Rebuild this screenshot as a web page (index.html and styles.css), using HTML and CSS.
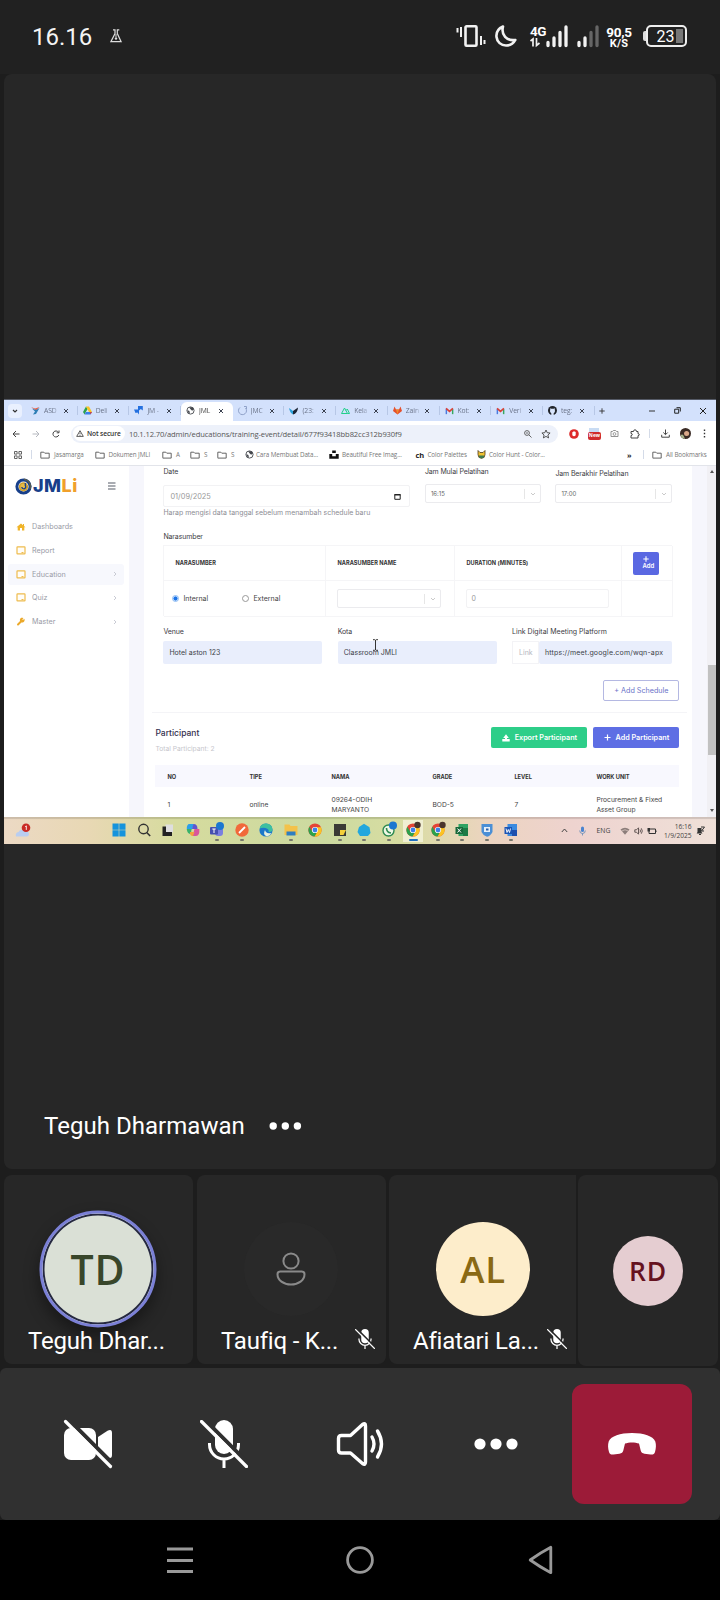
FILE: index.html
```html
<!DOCTYPE html>
<html lang="id">
<head>
<meta charset="utf-8">
<title>Meeting</title>
<link rel="stylesheet" href="styles.css">
</head>
<body>
<svg width="0" height="0" class="defs">
  <defs>
    <symbol id="x" viewBox="0 0 6 6"><path d="M1 1l4 4M5 1L1 5" stroke="#3c4250" stroke-width="1"/></symbol>
    <symbol id="folder" viewBox="0 0 10 8"><path d="M.8 6.6V1.2h3l1 1h4.4v4.9H.8z" fill="none" stroke="#555" stroke-width=".9"/></symbol>
    <symbol id="globe" viewBox="0 0 10 10"><circle cx="5" cy="5" r="4" fill="#fff" stroke="#44474d" stroke-width="1"/><path d="M1.3 4.5l2.5 1 .5 2.8L3 8.3zM3.5 1.3l3.8.2L8.7 4 6.8 5.2 5 3.5z" fill="#44474d"/></symbol>
    <symbol id="gmail" viewBox="0 0 10 8"><path d="M1.5 7.5V1.5" stroke="#4a7be0" stroke-width="1.6"/><path d="M8.5 7.5V2" stroke="#39a860" stroke-width="1.6"/><path d="M1.2 1.2L5 4.5l3.8-3.3" fill="none" stroke="#dc3f35" stroke-width="1.8"/></symbol>
    <symbol id="screen" viewBox="0 0 10 9"><rect x="1" y=".9" width="8" height="7" rx=".5" fill="#fffdf8" stroke="#eebc4e" stroke-width="1.2"/><path d="M5.5 6.500h2" stroke="#eebc4e" stroke-width="1"/></symbol>
    <symbol id="chev" viewBox="0 0 4 6"><path d="M1 1l2 2-2 2" fill="none" stroke="#c3c5cf" stroke-width=".9"/></symbol>
    <symbol id="down" viewBox="0 0 6 4"><path d="M1 1l2 2 2-2" fill="none" stroke="#c4c4c4" stroke-width=".9"/></symbol>
    <symbol id="chrome" viewBox="0 0 14 14"><circle cx="7" cy="7" r="6.6" fill="#e44436"/><path d="M1.3 3.7A6.6 6.6 0 0 0 6.6 13.6L9.5 8.5 4.3 8.5z" fill="#2ba24c"/><path d="M7 4.2h6A6.6 6.6 0 0 1 6.6 13.6L9.6 8.4z" fill="#fbc422"/><circle cx="7" cy="7" r="3.1" fill="#fff"/><circle cx="7" cy="7" r="2.4" fill="#3b7fe8"/></symbol>
    <symbol id="micoff" viewBox="0 0 48 48">
      <rect x="15" y="0" width="18" height="34" rx="9" fill="#fff"/>
      <path d="M9.500 23v1.500a14.500 14.500 0 0 0 29 0V23M24 39v9" fill="none" stroke="#fff" stroke-width="3"/>
      <path d="M4 -1L51 46" stroke="var(--back)" stroke-width="4"/>
      <path d="M1.500 1.500l45 45" stroke="#fff" stroke-width="3.200" stroke-linecap="round"/>
    </symbol>
  </defs>
</svg>

<header class="status">
  <span class="clock">16.16</span>
  <svg class="flask" width="12" height="14" viewBox="0 0 12 14"><path d="M3 .8h2v3.700L.9 12.700h10.200L7.300 4.500V.8H9.300" fill="none" stroke="#ddd" stroke-width="1.200"/><path d="M6 5v3" stroke="#ddd"/><circle cx="6" cy="9.500" r="1.200" fill="#ddd"/></svg>
  <svg class="vib" width="30" height="22" viewBox="0 0 30 22"><rect x="9.500" y="1.300" width="11" height="19.400" rx="1" fill="none" stroke="#f2f2f2" stroke-width="2.600"/><path d="M5 2v10M1.500 3v4.500M25 11v9M28.500 15v4" stroke="#f2f2f2" stroke-width="2"/></svg>
  <svg class="moon" width="22" height="22" viewBox="0 0 22 22"><path d="M8 1.500C3.500 3.500 1 7.500 1.500 12c.6 5 4.500 8.500 9.500 8.500 4 0 7.500-2.200 9.300-5.500-4 .6-7.600-.4-10.200-3.200C7.500 9 7 5.500 8 1.500z" fill="none" stroke="#f2f2f2" stroke-width="2.600" stroke-linejoin="round"/></svg>
  <div class="net"><b>4G</b><svg width="11" height="9" viewBox="0 0 11 9"><path d="M.5 3L3 1v7.500M6.500 0v7.500L9.500 5" fill="none" stroke="#f2f2f2" stroke-width="1.700"/></svg></div>
  <svg class="sig1" width="22" height="22" viewBox="0 0 22 22"><path d="M2 17.500v3M8 13v7.500M14 7.500v13M20 2v18.500" stroke="#f2f2f2" stroke-width="3.300" stroke-linecap="round"/></svg>
  <svg class="sig2" width="22" height="22" viewBox="0 0 22 22"><path d="M2 17.500v3M8 13v7.500" stroke="#f2f2f2" stroke-width="3.300" stroke-linecap="round"/><path d="M14 7.500v13M20 2v18.500" stroke="#666" stroke-width="3.300" stroke-linecap="round"/></svg>
  <div class="rate"><b>90,5</b><b class="ks">K/S</b></div>
  <div class="battery"><i class="nub"></i><div class="cell"><i class="charge"></i><span>23</span></div></div>
</header>

<main class="stage">
  <section class="share">
    <div class="tabs">
      <div class="tabsearch"><svg width="6" height="4" viewBox="0 0 6 4"><path d="M1 1l2 2 2-2" fill="none" stroke="#333" stroke-width="1.200"/></svg></div>
      <div class="tab"><svg width="9" height="9" viewBox="0 0 9 9"><path d="M0 1l4 1.500L8.500 1 5 4.500z" fill="#e3624b"/><path d="M1 2.500l4 1.500 3.500-2L5 8 2 8.500l2-3z" fill="#2e7fb5"/></svg><span>ASD</span><svg class="cl"><use href="#x"/></svg></div>
      <div class="tab"><svg width="9" height="9" viewBox="0 0 9 9"><path d="M3 .5L0 6l1.500 2.500L4.600 3z" fill="#2ba24c"/><path d="M3 .5h3L9 6H6z" fill="#fbc422"/><path d="M3 6h6L7.500 8.500h-6z" fill="#3b7fe8"/><path d="M7 6h2L7.500 8.500z" fill="#dc3f35"/></svg><span>Deli</span><svg class="cl"><use href="#x"/></svg></div>
      <div class="tab"><svg width="9" height="9" viewBox="0 0 9 9"><path d="M4 0h4.800v4.500L6.800 3 5 4.500v4L3.500 6.500 1.500 7 0 3.500h4z" fill="#2470df"/></svg><span>JM -</span><svg class="cl"><use href="#x"/></svg></div>
      <div class="tab on"><svg width="9" height="9"><use href="#globe"/></svg><span>JML</span><svg class="cl"><use href="#x"/></svg></div>
      <div class="tab"><svg width="9" height="9" viewBox="0 0 9 9"><path d="M2 1.500A4 4 0 1 0 7.500 2" fill="none" stroke="#8fa1c8" stroke-width="1"/><path d="M6 .5h2.500V3" fill="none" stroke="#8fa1c8"/></svg><span>JMC</span><svg class="cl"><use href="#x"/></svg></div>
      <div class="tab"><svg width="9" height="9" viewBox="0 0 9 9"><path d="M0 2l4 3v3.500Q1 7 0 2z" fill="#2aa0d8"/><path d="M4 5l5-3.500Q8.500 7.500 4 8.500z" fill="#1a2333"/></svg><span>(23:</span><svg class="cl"><use href="#x"/></svg></div>
      <div class="tab"><svg width="9" height="9" viewBox="0 0 9 9"><path d="M.5 7.500L3.500 2l3 5.500zM5 4.500l1.300-1.500 2.200 4.500H6.500" fill="none" stroke="#21cf8b" stroke-width="1"/></svg><span>Kela</span><svg class="cl"><use href="#x"/></svg></div>
      <div class="tab"><svg width="9" height="9" viewBox="0 0 9 9"><path d="M1.500.5L3 3.500h3L7.500.5 9 5 4.500 8.500 0 5z" fill="#e5502c"/><path d="M3 3.500h3L4.500 8.500z" fill="#f08a2c"/></svg><span>Zain</span><svg class="cl"><use href="#x"/></svg></div>
      <div class="tab"><svg width="9" height="8"><use href="#gmail"/></svg><span>Kot:</span><svg class="cl"><use href="#x"/></svg></div>
      <div class="tab"><svg width="9" height="8"><use href="#gmail"/></svg><span>Veri</span><svg class="cl"><use href="#x"/></svg></div>
      <div class="tab"><svg width="9" height="9" viewBox="0 0 9 9"><circle cx="4.500" cy="4.500" r="4.500" fill="#20242a"/><path d="M3.300 8.900V7.200C2 6.500 1.800 5 2.200 3.800L2.200 2.200l1.200.5h2.200l1.200-.5v1.600C7.200 5 7 6.500 5.700 7.200v1.700z" fill="#d8e4fb"/></svg><span>teg:</span><svg class="cl"><use href="#x"/></svg></div>
      <svg class="plus" width="6" height="6" viewBox="0 0 6 6"><path d="M3 .3v5.400M.3 3h5.400" stroke="#333" stroke-width=".9"/></svg>
      <svg class="wmin" width="6" height="6" viewBox="0 0 6 6"><path d="M0 3h6" stroke="#333" stroke-width="1"/></svg>
      <svg class="wmax" width="7" height="7" viewBox="0 0 7 7"><path d="M.7 2.200h4v4h-4z" fill="none" stroke="#222" stroke-width="1"/><path d="M2.500.7h3.800v3.800" fill="none" stroke="#222" stroke-width="1"/></svg>
      <svg class="wx" width="8" height="8" viewBox="0 0 8 8"><path d="M1 1l6 6M7 1L1 7" stroke="#222" stroke-width="1"/></svg>
    </div>

    <div class="toolbar">
      <svg width="8" height="8" viewBox="0 0 8 8"><path d="M7.500 4H1M4 1L1 4l3 3" fill="none" stroke="#444" stroke-width="1"/></svg>
      <svg width="8" height="8" viewBox="0 0 8 8"><path d="M.5 4H7M4 1l3 3-3 3" fill="none" stroke="#b5b8bf" stroke-width="1"/></svg>
      <svg width="8" height="8" viewBox="0 0 8 8"><path d="M6.800 5A3 3 0 1 1 6.400 2.200M7 .5v2.300H4.700" fill="none" stroke="#444" stroke-width="1"/></svg>
      <div class="omni">
        <div class="chip"><svg width="8" height="7" viewBox="0 0 8 7"><path d="M4 .7L7.300 6.400H.7zM4 2.700v1.600M4 5v.8" fill="none" stroke="#333" stroke-width=".8"/></svg><b>Not secure</b></div>
        <span class="url">10.1.12.70/admin/educations/training-event/detail/677f93418bb82cc312b930f9</span>
        <svg width="8" height="8" viewBox="0 0 8 8"><circle cx="3" cy="3" r="2.400" fill="none" stroke="#555" stroke-width=".9"/><path d="M4.800 4.800l2.700 2.700M2 3h2" stroke="#555" stroke-width=".9"/></svg>
        <svg width="10" height="10" viewBox="0 0 10 10"><path d="M5 1l1.200 2.700 2.900.3-2.200 2 .7 2.900L5 7.400 2.400 8.900 3.100 6 .9 4l2.900-.3z" fill="none" stroke="#444" stroke-width=".9"/></svg>
      </div>
      <svg class="t1" width="10" height="10" viewBox="0 0 10 10"><circle cx="5" cy="5" r="4.800" fill="#dd2a2a"/><path d="M3.300 3.200v3q1.700 2 3.400 0v-3.200L5 2.200z" fill="#fff"/></svg>
      <div class="new"><i></i><b>New</b></div>
      <svg class="t3" width="9" height="9" viewBox="0 0 9 9"><path d="M1 2.500h1.500l.8-1h2.400l.8 1H8v5H1z" fill="none" stroke="#888" stroke-width=".9"/><circle cx="4.500" cy="5" r="1.400" fill="none" stroke="#888" stroke-width=".8"/></svg>
      <svg class="t4" width="10" height="10" viewBox="0 0 10 10"><path d="M1 2.500h2.500q0-1.700 1.500-1.700t1.500 1.700H8v2.200q1.300 0 1.300 1T8 6.700V9H1V6.500q1.300 0 1.300-1T1 4.500z" fill="none" stroke="#444" stroke-width="1"/></svg>
      <i class="vbar"></i>
      <svg class="t5" width="9" height="9" viewBox="0 0 9 9"><path d="M4.500.5v5M2.300 3.500l2.200 2.200 2.200-2.200M.7 5.800v2.400h7.600V5.800" fill="none" stroke="#444" stroke-width="1"/></svg>
      <svg class="t6" width="11" height="11" viewBox="0 0 10 10"><circle cx="5" cy="5" r="5" fill="#3a2b25"/><circle cx="6" cy="5" r="2.300" fill="#dba98a"/><path d="M.5 7q2-3 4 2.900Q1.500 9.500.5 7z" fill="#a8b48c"/></svg>
      <svg class="t7" width="3" height="9" viewBox="0 0 3 9"><path d="M1.500 .5v1.400M1.500 3.800v1.400M1.500 7.100v1.400" stroke="#333" stroke-width="1.400"/></svg>
    </div>

    <div class="marks">
      <svg width="8" height="8" viewBox="0 0 8 8"><path d="M.5.500h2.600v2.600H.5zM4.900.500h2.600v2.600H4.900zM.5 4.900h2.600v2.600H.5zM4.900 4.900h2.600v2.600H4.900z" fill="none" stroke="#555" stroke-width=".9"/></svg>
      <i class="vbar"></i>
      <svg width="10" height="8"><use href="#folder"/></svg><span>Jasamarga</span>
      <svg width="10" height="8"><use href="#folder"/></svg><span>Dokumen JMLI</span>
      <svg width="10" height="8"><use href="#folder"/></svg><span>A</span>
      <svg width="10" height="8"><use href="#folder"/></svg><span>S</span>
      <svg width="10" height="8"><use href="#folder"/></svg><span>S</span>
      <svg width="9" height="9"><use href="#globe"/></svg><span>Cara Membuat Data...</span>
      <svg width="10" height="9" viewBox="0 0 10 9"><path d="M3.200.5h3.600v2.500H3.200zM.3 4h2.900v2.300h3.600V4h2.900v4.700H.3z" fill="#111"/></svg><span>Beautiful Free Imag...</span>
      <b>ch</b><span>Color Palettes</span>
      <svg width="9" height="9" viewBox="0 0 9 9"><path d="M1 .5v4a3.500 3.800 0 0 0 7 0v-4L6 2.500H3z" fill="#f2c230" stroke="#4b3b20" stroke-width=".8"/><path d="M2 5.500h5v2l-2.500 1L2 7.500z" fill="#3f7a50"/></svg><span>Color Hunt - Color...</span>
      <b class="more">»</b><i class="vbar"></i>
      <svg width="10" height="8"><use href="#folder"/></svg><span>All Bookmarks</span>
    </div>

    <div class="page">
      <aside class="side">
        <div class="brand">
          <svg width="17" height="17" viewBox="0 0 17 17"><circle cx="8.500" cy="8.500" r="6.600" fill="none" stroke="#173f8a" stroke-width="3"/><path d="M9 1.300A7.200 7.200 0 0 1 15 11" fill="none" stroke="#555a50" stroke-width="1.600"/><circle cx="8.500" cy="8.800" r="3.900" fill="#e8bb45" stroke="#cfa02d" stroke-width="1.500"/><path d="M6.800 9a2 2 0 1 0 3.500-1.500V5" fill="none" stroke="#173f8a" stroke-width="1.300"/></svg>
          <span class="logo">JM<em>Li</em></span>
          <svg class="burger" width="8" height="8" viewBox="0 0 8 8"><path d="M0 1h7.500M0 4h7.500M0 7h7.500" stroke="#555a66" stroke-width="1.100"/></svg>
        </div>
        <nav>
          <a><svg width="9" height="8" viewBox="0 0 9 8"><path d="M4.500.5L0 4.300h1.200v3.200h2.300V5h2v2.500h2.300V4.300H9L7.500 3V1H6.500v1.200z" fill="#f0b429"/></svg><span>Dashboards</span></a>
          <a><svg width="10" height="9"><use href="#screen"/></svg><span>Report</span></a>
          <a class="on"><svg width="10" height="9"><use href="#screen"/></svg><span>Education</span><svg width="4" height="6"><use href="#chev"/></svg></a>
          <a><svg width="10" height="9"><use href="#screen"/></svg><span>Quiz</span><svg width="4" height="6"><use href="#chev"/></svg></a>
          <a><svg width="9" height="9" viewBox="0 0 9 9"><path d="M1.500 7.500L5 4" stroke="#eba92a" stroke-width="2" stroke-linecap="round"/><path d="M7.800 1.800L6.500 3 5.800 2.400 7 1A2.400 2.400 0 1 0 7.800 1.800z" fill="#eba92a"/></svg><span>Master</span><svg width="4" height="6"><use href="#chev"/></svg></a>
        </nav>
      </aside>

      <div class="card">
        <div class="when">
          <div class="field"><label>Date</label>
            <div class="inp date"><span>01/09/2025</span><svg width="7" height="7" viewBox="0 0 7 7"><path d="M.8 1.500h5.400v4.800H.8z" fill="none" stroke="#222" stroke-width="1"/><path d="M.5 1.800h6" stroke="#222" stroke-width="1.400"/></svg></div>
            <small>Harap mengisi data tanggal sebelum menambah schedule baru</small></div>
          <div class="field"><label>Jam Mulai Pelatihan</label><div class="sel"><span>16:15</span><i></i><svg width="6" height="4"><use href="#down"/></svg></div></div>
          <div class="field low"><label>Jam Berakhir Pelatihan</label><div class="sel"><span>17:00</span><i></i><svg width="6" height="4"><use href="#down"/></svg></div></div>
        </div>
        <label class="sub">Narasumber</label>
        <div class="speakers">
          <div><b>NARASUMBER</b></div><div><b>NARASUMBER NAME</b></div><div><b>DURATION (MINUTES)</b></div>
          <div class="addcell"><button class="add"><svg width="6" height="6" viewBox="0 0 6 6"><path d="M3 .3v5.400M.3 3h5.400" stroke="#fff" stroke-width="1.100"/></svg><span>Add</span></button></div>
          <div class="radios"><i class="radio on"></i><span>Internal</span><i class="radio"></i><span>External</span></div>
          <div><div class="sel wide"><span></span><i></i><svg width="6" height="4"><use href="#down"/></svg></div></div>
          <div><div class="inp dur">0</div></div><div></div>
        </div>
        <div class="place">
          <div class="field"><label>Venue</label><div class="fill">Hotel aston 123</div></div>
          <div class="field"><label>Kota</label><div class="fill">Classroom JMLI</div>
            <svg class="ibeam" width="7" height="12" viewBox="0 0 7 12"><path d="M1 .7h1.800l.7.600.7-.6H6M3.500 1v10M1 11.300h1.800l.7-.6.700.6H6" fill="none" stroke="#333" stroke-width="1"/></svg></div>
          <div class="field"><label class="wider">Link Digital Meeting Platform</label><div class="linkrow"><span>Link</span><div class="fill">https://meet.google.com/wqn-apx</div></div></div>
        </div>
        <div class="schedrow"><button class="sched">+ Add Schedule</button></div>
        <section class="people">
          <div class="phead">
            <div><h2>Participant</h2><p>Total Participant: 2</p></div>
            <button class="green"><svg width="8" height="8" viewBox="0 0 8 8"><path d="M4 .3L6.800 4H1.200zM.3 5h7.400v2.500H.3zM3 3h2v2H3z" fill="#fff"/></svg><span>Export Participant</span></button>
            <button class="blue"><svg width="7" height="7" viewBox="0 0 7 7"><path d="M3.500.5v6M.5 3.500h6" stroke="#fff" stroke-width="1.200"/></svg><span>Add Participant</span></button>
          </div>
          <div class="row th"><span>NO</span><span>TIPE</span><span>NAMA</span><span>GRADE</span><span>LEVEL</span><span>WORK UNIT</span></div>
          <div class="row td"><span>1</span><span>online</span><span>09264-ODIH<br>MARYANTO</span><span>BOD-5</span><span>7</span><span>Procurement &amp; Fixed<br>Asset Group</span></div>
        </section>
      </div>
      <div class="scroll"><i class="up"></i><i class="thumb"></i><i class="dn"></i></div>
    </div>

    <div class="taskbar">
      <svg class="weather" width="18" height="16" viewBox="0 0 18 16"><path d="M2 13.500h11q3-1 1.500-4-2-2-4-1Q7 5 4.500 9 1 9.500 2 13.500z" fill="#b9cdf0"/><circle cx="12" cy="4.800" r="4.300" fill="#c92a25"/><path d="M11.200 3.700l1.100-.8v4" fill="none" stroke="#fff" stroke-width=".9"/></svg>
      <div class="apps">
        <span><svg viewBox="0 0 14 14"><path d="M.5.500h6.200v6.200H.5zM7.300.500h6.200v6.200H7.300zM.5 7.300h6.200v6.200H.5zM7.300 7.300h6.200v6.200H7.300z" fill="#1593dc"/></svg></span>
        <span><svg viewBox="0 0 14 14"><circle cx="6.500" cy="6" r="4.700" fill="none" stroke="#333" stroke-width="1.400"/><path d="M9.700 9.500l3.500 3.500" stroke="#333" stroke-width="1.600"/></svg></span>
        <span><svg viewBox="0 0 14 14"><path d="M4.500 1.500H12v8H4.500z" fill="#dedede"/><path d="M1.500 3.500h3.500v5.500h6v4h-9.500z" fill="#222"/></svg></span>
        <span><svg viewBox="0 0 14 14"><path d="M3.500 1h4.500L6 6.500H.8Q.5 1 3.500 1z" fill="#2a9fe8"/><path d="M7.500 1q4 0 4 5H6z" fill="#5f55d0"/><path d="M13.300 6q.7 7-3.300 7H6.500l2-7z" fill="#d8569c"/><path d="M.8 6h4.700L5 11Q1 11 .8 6z" fill="#38b26b"/><path d="M4 9h4.500l-1.500 4q-3.500 0-3-4z" fill="#f1a33c"/></svg></span>
        <span class="run"><svg viewBox="0 0 14 14"><rect x="5" y="4" width="8" height="9" rx="3" fill="#7a7fe0"/><rect x="0" y="4" width="8" height="7.500" rx="1" fill="#4650b0"/><path d="M2.300 6h3.400M4 6v4" stroke="#fff"/><circle cx="10" cy="3" r="4" fill="#1b77d0"/></svg></span>
        <span class="run"><svg viewBox="0 0 14 14"><circle cx="7" cy="7" r="6.700" fill="#f1693a"/><path d="M4 10l6-6" stroke="#fff" stroke-width="1.800"/></svg></span>
        <span><svg viewBox="0 0 14 14"><circle cx="7" cy="7" r="6.600" fill="#1b78c9"/><path d="M.6 5.500Q2 .5 7 .5q6.300 0 6.500 6.500-.5 2-4 2 1-3-3-4-3-.5-5.900.5z" fill="#3cc0a0"/><path d="M6 7Q6.500 10 10 10.300q2 0 2.500-.6-1.500 3.300-5 3.500Q3.500 12 6 7z" fill="#e6f0e0"/></svg></span>
        <span class="run"><svg viewBox="0 0 14 14"><path d="M.5 1.500h5l1 1.500h7v9H.5z" fill="#f3c24a"/><path d="M2.500 8.500h9v4h-9z" fill="#2e7ec0"/></svg></span>
        <span><svg><use href="#chrome"/></svg></span>
        <span class="run"><svg viewBox="0 0 14 14"><path d="M1 1h12v12H1z" fill="#3a3a36"/><path d="M7 7h6l-2.500 5H7z" fill="#f4cf3a"/></svg></span>
        <span class="run"><svg viewBox="0 0 14 14"><path d="M7 .8l5.500 3.500L13.500 10 11 13H3L.5 9 2 4z" fill="#22a7dd"/></svg></span>
        <span class="run"><svg viewBox="0 0 14 14"><circle cx="6.500" cy="7.500" r="5.500" fill="#eef7e5" stroke="#2d8a50" stroke-width="1.400"/><path d="M4.500 5q0 4.500 4.500 5" fill="none" stroke="#2d8a50" stroke-width="1.600"/><circle cx="11" cy="2.500" r="4" fill="#1b77d0"/></svg></span>
        <span class="run now"><svg><use href="#chrome"/><circle cx="11.500" cy="2" r="3.200" fill="#4a352c"/></svg></span>
        <span class="run"><svg><use href="#chrome"/><circle cx="11.500" cy="2" r="3.200" fill="#4a352c"/></svg></span>
        <span class="run"><svg viewBox="0 0 14 14"><path d="M3.500 1H13v12H3.500z" fill="#2fa363"/><path d="M8 5h5v8H8z" fill="#1b7a45"/><path d="M.5 4h7.500v7H.5z" fill="#17683a"/><path d="M2.500 5.500l3.500 4M6 5.500l-3.500 4" stroke="#fff"/></svg></span>
        <span class="run"><svg viewBox="0 0 14 14"><path d="M1.500 1h11v8q-2 4-5.500 4.700Q3 12.500 1.500 9z" fill="#4b8fd6"/><path d="M4 4h6v5H4z" fill="#e6f0fa"/><path d="M6 5.500h2.500v2H6z" fill="#2a5fa8"/></svg></span>
        <span class="run"><svg viewBox="0 0 14 14"><path d="M3.500 1H13v12H3.500z" fill="#3b8be0"/><path d="M8 7h5v6H8z" fill="#1d4fae"/><path d="M.5 4h7.500v7H.5z" fill="#1a54b5"/><path d="M2 5.500l1 4 1.300-3 1.200 3 1-4" fill="none" stroke="#fff" stroke-width=".9"/></svg></span>
      </div>
      <svg class="tup" width="7" height="5" viewBox="0 0 7 5"><path d="M.8 4l2.700-3 2.700 3" fill="none" stroke="#444" stroke-width="1"/></svg>
      <svg class="tmic" width="7" height="10" viewBox="0 0 7 10"><rect x="2" y=".5" width="3" height="5.500" rx="1.500" fill="#4b84d0"/><path d="M.7 4.500q0 3 2.800 3t2.800-3M3.500 7.500v2" fill="none" stroke="#6d8fb8" stroke-width=".9"/></svg>
      <span class="lang">ENG</span>
      <svg class="twifi" width="10" height="8" viewBox="0 0 10 8"><path d="M.5 2.500Q5-1 9.500 2.500L5 7.800z" fill="#8c7d7a"/><path d="M1.800 4Q5 1.500 8.200 4" fill="none" stroke="#efdcd5" stroke-width=".6"/></svg>
      <svg class="tvol" width="10" height="8" viewBox="0 0 10 8"><path d="M.8 2.800h1.700l2-2v6.400l-2-2H.8zM6 2.500q1 1.500 0 3M7.300 1.300q2 2.700 0 5.400" fill="none" stroke="#554a48" stroke-width=".9"/></svg>
      <svg class="tbat" width="10" height="8" viewBox="0 0 10 8"><path d="M2 2h6.500v4.500H2z" fill="none" stroke="#333" stroke-width="1"/><path d="M.5 1h2.500v3.500H.5z" fill="#333"/><path d="M9 3.500v1.500" stroke="#333"/></svg>
      <div class="dt">16:16<br>1/9/2025</div>
      <svg class="tbell" width="9" height="9" viewBox="0 0 9 9"><path d="M1.500 2h4v4l1 1.500H.7l.8-1.500z" fill="#333"/><path d="M5 1h3.500L5.500 5H8M3 8.500h2" fill="none" stroke="#333" stroke-width="1"/></svg>
    </div>
  </section>

  <div class="presenter"><span>Teguh Dharmawan</span><svg width="34" height="10" viewBox="0 0 34 10"><g fill="#fff"><circle cx="4.200" cy="5" r="3.700"/><circle cx="16.300" cy="5" r="3.700"/><circle cx="28.400" cy="5" r="3.700"/></g></svg></div>
</main>

<section class="tiles">
  <div class="tile"><div class="ava td">TD</div><div class="who"><span>Teguh Dhar...</span></div></div>
  <div class="tile"><div class="ava anon"><svg width="30" height="34" viewBox="0 0 30 34"><circle cx="15" cy="9" r="7.600" fill="none" stroke="#8a8a8a" stroke-width="2"/><path d="M4.200 19.500h21.600q2.700 0 2.700 2.700c0 6-6 10.300-13.500 10.300S1.500 28.200 1.500 22.200q0-2.700 2.700-2.700z" fill="none" stroke="#8a8a8a" stroke-width="2"/></svg></div><div class="who"><span>Taufiq - K...</span><svg class="mute"><use href="#micoff"/></svg></div></div>
  <div class="tile t3rd"><div class="ava al">AL</div><div class="who"><span>Afiatari La...</span><svg class="mute"><use href="#micoff"/></svg></div></div>
  <div class="tile last"><div class="ava rd">RD</div></div>
</section>

<footer class="controls">
  <svg width="48" height="48" viewBox="0 0 48 48"><rect x="0" y="8" width="32" height="32" rx="7" fill="#fff"/><path d="M34 17l9.500-6.300Q48 8.500 48 13v22q0 4.500-4.500 2.300L34 31z" fill="#fff"/><path d="M4-1l47 47" stroke="#303030" stroke-width="4"/><path d="M1.500 1.500l45 45" stroke="#fff" stroke-width="3.200" stroke-linecap="round"/></svg>
  <svg class="bigmic" width="48" height="48"><use href="#micoff"/></svg>
  <svg width="48" height="48" viewBox="0 0 48 48"><path d="M5.500 15.500h9L26.500 4.500Q29.500 2.500 29.500 6v36q0 3.500-3 1.500L14.500 33h-9q-3 0-3-3V18.500q0-3 3-3z" fill="none" stroke="#fff" stroke-width="3.400" stroke-linejoin="round"/><path d="M36 17q4 7 0 14M41.500 11q8 13 0 26" fill="none" stroke="#fff" stroke-width="3.400" stroke-linecap="round"/></svg>
  <svg width="48" height="48" viewBox="0 0 48 48"><g fill="#fff"><circle cx="8" cy="24" r="5.600"/><circle cx="24" cy="24" r="5.600"/><circle cx="40" cy="24" r="5.600"/></g></svg>
  <div class="hang"><svg width="48" height="24" viewBox="0 0 48 24"><path d="M24 1C36 1 45 4 47.300 9.500c1 3 .8 7-.3 10.500-.7 2-2 2.800-4.500 2.500l-6-.8c-2.200-.3-3.300-1.200-3.800-3.200L31 11.500c-4-1.500-10-1.500-14 0l-1.700 7c-.5 2-1.600 2.900-3.800 3.200l-6 .8C3 22.800 1.700 22 1 20c-1.100-3.500-1.300-7.500-.3-10.500C3 4 12 1 24 1z" fill="#fff"/></svg></div>
</footer>
<nav class="sysnav">
  <svg width="26" height="26" viewBox="0 0 26 26"><path d="M0 2h26M0 13.500h26M0 24.500h26" stroke="#999" stroke-width="3.200"/></svg>
  <svg width="28" height="28" viewBox="0 0 28 28"><circle cx="14" cy="14" r="12.400" fill="none" stroke="#999" stroke-width="2.800"/></svg>
  <svg width="26" height="30" viewBox="0 0 26 30"><path d="M22.800 2.300v25.400Q12 22 2.200 15 12 8 22.800 2.300z" fill="none" stroke="#999" stroke-width="2.800" stroke-linejoin="round"/></svg>
</nav>
</body>
</html>
```
FILE: styles.css
```css
* { box-sizing: border-box; }
body { margin: 0; width: 720px; height: 1600px; background: #1d1d1d; color: #fff; font-family: Roboto, sans-serif; overflow: hidden; }
svg { display: block; flex: none; overflow: visible; }
.defs { position: absolute; }
i, em { font-style: normal; }
button { border: 0; padding: 0; margin: 0; font: inherit; color: inherit; }

.status { height: 74px; background: #212121; display: flex; align-items: flex-start; padding-left: 32px; }
.clock { font-size: 24px; line-height: 28px; margin-top: 23px; width: 78px; color: #f4f4f4; }
.flask { margin-top: 29px; }
.vib { margin: 25px 0 0 334px; }
.moon { margin: 25px 0 0 9px; }
.net { margin: 25px 0 0 13px; width: 16px; font-size: 13.5px; line-height: 12px; letter-spacing: -.5px; }
.net svg { margin-top: 1px; }
.sig1 { margin-top: 25px; }
.sig2 { margin: 25px 0 0 9px; }
.rate { width: 28px; margin: 26px 0 0 6px; display: flex; flex-direction: column; align-items: center; font-size: 13.5px; line-height: 13px; letter-spacing: -.3px; }
.rate .ks { font-size: 11px; line-height: 10px; letter-spacing: .3px; }
.battery { display: flex; align-items: center; margin: 25px 0 0 10px; height: 22px; }
.nub { width: 3px; height: 10px; background: #ddd; border-radius: 2px 0 0 2px; }
.cell { position: relative; width: 41px; height: 22px; border: 2px solid #eee; border-radius: 5px; display: flex; align-items: center; justify-content: center; font-size: 16px; }
.charge { position: absolute; right: 2px; top: 2px; width: 7px; height: 14px; background: #777; }
.cell span { position: relative; left: -1px; }

.stage { margin: 0 4px; height: 1095px; background: #272727; border-radius: 8px; padding-top: 325px; }
.share { height: 445px; border-top: 1px solid #555a66; background: #fff; color: #444; font-family: "Open Sans", sans-serif; overflow: hidden; }
.tabs { height: 21px; background: #d3e1fc; display: flex; align-items: center; }
.tabsearch { width: 14px; height: 14px; margin: 0 4px 0 4px; border-radius: 4px; background: #e9f0fe; display: grid; place-items: center; }
.tab { width: 51.7px; height: 9px; display: flex; align-items: center; padding-left: 5px; font-size: 6.8px; color: #6a7388; border-right: 1px solid #b7c7e6; }
.tab span { width: 14px; margin: 0 4.500px 0 4px; white-space: nowrap; letter-spacing: -.1px; -webkit-mask-image: linear-gradient(90deg, #000 60%, #0003); mask-image: linear-gradient(90deg, #000 60%, #0003); }
.cl { width: 6px; height: 6px; }
.tab.on { height: 19px; align-self: flex-end; background: #fff; border-radius: 6px 6px 0 0; border: 0; color: #444; padding-bottom: 2px; }
.plus { margin-left: 4.500px; }
.wmin { margin-left: 44px; }
.wmax { margin-left: 19px; }
.wx { margin-left: 18px; }

.toolbar { height: 25px; display: flex; align-items: center; padding-left: 8px; gap: 12px; }
.omni { width: 487px; height: 18px; margin-left: -1px; border-radius: 9px; background: #edf1fa; display: flex; align-items: center; padding-left: 2px; }
.chip { width: 52px; height: 15px; border-radius: 8px; background: #fff; display: flex; align-items: center; gap: 3px; padding-left: 3px; font-size: 6.6px; white-space: nowrap; letter-spacing: -.1px; color: #333; }
.url { width: 395px; margin-left: 4px; font-size: 7.6px; color: #555; white-space: nowrap; letter-spacing: -.11px; }
.omni svg + svg { margin-left: 9px; }
.omni .chip b { font-weight: 600; }
.t1 { margin-left: -1px; }
.new { width: 13px; margin-left: -3px; display: flex; flex-direction: column; }
.new i { width: 10px; height: 4px; margin-left: 1px; background: #c9dcf3; }
.new b { height: 8px; border-radius: 2px; background: #cf2b2b; color: #fff; font-size: 5px; line-height: 7px; text-align: center; }
.t3 { margin-left: -3px; }
.t4 { margin-left: -1px; }
.vbar { width: 1px; height: 9px; background: #d4dbe8; }
.toolbar .vbar { margin-left: -3px; }
.t5 { margin-left: -1px; }
.t6 { margin-left: -2px; }
.t7 { margin-left: 0; }

.marks { height: 20px; border-bottom: 1px solid #e2e4ea; display: grid; align-items: center; justify-items: start; padding: 0 0 2px 10px; font-size: 6.3px; color: #777; white-space: nowrap; letter-spacing: -.1px;
  grid-template-columns: 17px 9px 14px 41px 13.5px 53.5px 14px 14px 14px 13px 14px 13.5px 11.5px 73px 13px 73.5px 12px 49.5px 12px 138px 16px 9px 14px 44px; }
.marks b { color: #222; font-size: 7.5px; line-height: 8px; }

.page { height: 351px; display: flex; background: #f6f6fc; font-family: Inter, sans-serif; overflow: hidden; }
.side { width: 125px; background: #fff; }
.brand { height: 40px; padding: 0 0 0 11px; display: flex; align-items: center; }
.logo { font: 800 18px/18px Inter, sans-serif; color: #173f8a; letter-spacing: .5px; width: 75px; margin-left: 1px; }
.logo em { color: #f0a02c; }
.side nav { margin-top: 10px; padding: 0 5px 0 4px; display: flex; flex-direction: column; gap: 2.800px; }
.side a { height: 21px; border-radius: 3px; display: flex; align-items: center; padding: 0 7px 0 8px; font-size: 7.2px; color: #999ba6; }
.side a span { flex: 1; margin-left: 6px; }
.side a.on { background: #f7f8fd; }
.side a svg:first-child { width: 10px; }

.card { width: 548px; margin-left: 15px; background: #fff; padding-left: 19.500px; font-size: 7px; color: #444; white-space: nowrap; }
.field { display: flex; flex-direction: column; position: relative; }
label { display: block; font-size: 7px; line-height: 12px; color: #3c3c44; letter-spacing: -.13px; }
.wider { letter-spacing: 0; }
.when { height: 66px; display: grid; grid-template-columns: 247px 116px 117px; column-gap: 14.5px; align-items: start; }
.inp { border: 1px solid #f2f2f4; border-radius: 2px; color: #999; }
.date { margin-top: 7px; height: 22px; display: flex; align-items: center; justify-content: space-between; padding: 0 8px 0 6px; font-size: 7.4px; }
small { font-size: 6.95px; line-height: 10px; margin-top: 1px; color: #8c8c94; }
.sel { height: 19px; border: 1px solid #ebebee; border-radius: 2px; margin-top: 6px; display: flex; align-items: center; padding: 0 4px 0 5px; font-size: 6px; color: #666; }
.sel span { flex: 1; }
.sel i { width: 1px; height: 10px; background: #e6e6e6; margin-right: 5px; }
.low label { padding-top: 2px; }
.low .sel { margin-top: 4px; }
.sub { line-height: 10px; margin-bottom: 3px; }
.speakers { width: 509px; height: 71px; display: grid; grid-template-columns: 162px 129px 167px 51px; grid-template-rows: 35px 36px; border: 1px solid #f5f5f7; border-width: 1px 0 0 1px; }
.speakers > div { border: 1px solid #f5f5f7; border-width: 0 1px 1px 0; padding-left: 11px; display: flex; align-items: center; }
.speakers b { font-size: 5.6px; font-weight: 700; color: #333; letter-spacing: .05px; }
.add { width: 26px; height: 23px; border-radius: 2px; background: #5a68e2; color: #fff; font-size: 6px; font-weight: 600; display: flex; flex-direction: column; align-items: center; justify-content: center; }
.add span { line-height: 8px; margin-left: 4px; }
.speakers .radios { color: #444; }
.radio { width: 7px; height: 7px; border: 1px solid #999; border-radius: 50%; margin-right: 4px; margin-left: -3px; }
.radio.on { border-color: #8fbdf3; background: radial-gradient(#1a73e8 50%, #cfe2fb 65%); }
.radios span { width: 62px; }
.wide { width: 104px; margin: 0; }
.dur { width: 143px; height: 19px; line-height: 18px; padding-left: 4px; }
.place { margin-top: 11px; display: grid; grid-template-columns: 159px 159px 161px; column-gap: 15.300px; }
.place label { line-height: 10px; margin-bottom: 4px; }
.fill { height: 23px; line-height: 23px; border-radius: 2px; background: #e9eefc; padding-left: 6px; color: #3c3f48; overflow: hidden; }
.linkrow { display: flex; }
.linkrow span { width: 27px; line-height: 21px; border: 1px solid #f3f3f6; padding-left: 6px; color: #b4b6c0; }
.linkrow .fill { width: 133px; letter-spacing: .17px; }
.ibeam { position: absolute; left: 34px; top: 12px; }
.schedrow { width: 516px; margin-top: 16px; display: flex; justify-content: flex-end; }
.sched { width: 76px; height: 21px; background: #fff; border: 1px solid #b4b8e2; border-radius: 2px; color: #6a72c8; font-size: 7.2px; }
.people { margin: 11px 0 0 -11px; border-top: 1px solid #f4f4f7; width: 535px; padding: 14px 8px 0 3px; }
.phead { height: 38px; display: flex; align-items: flex-start; color: #fff; }
.phead > div { flex: 1; }
h2 { margin: 0; font-size: 8.5px; line-height: 12px; font-weight: 500; color: #35304f; }
p { margin: 5px 0 0; line-height: 10px; color: #c6c6cc; font-size: 6.7px; }
.green, .blue { height: 21px; border-radius: 2px; display: flex; align-items: center; justify-content: center; font-size: 7.2px; font-weight: 600; }
.green { width: 96px; background: #2dce89; gap: 5px; margin-right: 6px; }
.blue { width: 86px; background: #5e6ee4; gap: 5px; }
.row { display: grid; grid-template-columns: 82px 82px 101px 82px 82px 1fr; padding-left: 12px; align-items: center; }
.th { height: 22px; background: #f8f8fe; font-size: 5.7px; font-weight: 700; color: #333; }
.td { font-size: 6.7px; line-height: 10px; color: #444; }
.row.td { height: 35px; }
.scroll { margin-left: 15.500px; width: 9px; background: #f1f0f4; display: flex; flex-direction: column; align-items: center; }
.up, .dn { border: 2.5px solid transparent; width: 0; }
.up { border-bottom: 3px solid #555; border-top: 0; margin: 4px 0 192px; }
.thumb { width: 8px; height: 90px; background: #c1c1c1; }
.dn { border-top: 3px solid #555; border-bottom: 0; margin-top: 54px; }

.taskbar { height: 27px; display: flex; align-items: center; box-shadow: inset 0 2px 1px #0002; font-size: 7px; color: #444; padding-left: 10px;
  background: linear-gradient(90deg, #ecd9c4 0, #e8d8b4 12%, #d6db9e 24%, #ccdaa0 45%, #d8dda2 56%, #ecd4c0 68%, #eed3cf 80%, #efe0d8 100%); }
.weather { width: 18px; }
.apps { margin-left: 75px; display: flex; }
.apps span { width: 24.5px; height: 23px; display: flex; flex-direction: column; align-items: center; padding-top: 4px; }
.apps svg { width: 14px; height: 14px; }
.run::after { content: ""; width: 4px; height: 1.500px; border-radius: 1px; background: #77776c; margin-top: 2px; }
.now { background: linear-gradient(#f0efd2, #f0efd2) center / 20px 22px no-repeat; }
.now::after { width: 9px; height: 2px; background: #1f6fc0; }
.tup { margin-left: 37px; }
.tmic { margin-left: 11px; }
.lang { margin-left: 11px; width: 23px; font-size: 6.8px; }
.tvol { margin-left: 4px; }
.tbat { margin-left: 3px; }
.dt { width: 35px; text-align: right; line-height: 9px; font-size: 6.6px; }
.tbell { margin-left: 4px; }

.presenter { margin: 266px 0 0 40px; display: flex; align-items: center; gap: 24px; font-size: 24px; line-height: 32px; letter-spacing: .03px; }
.presenter span { width: 201px; white-space: nowrap; }

.tiles { height: 199px; padding: 6px 2px 4px 4px; display: grid; grid-template-columns: 189px 189px 187px 140px; column-gap: 4px; align-items: start; }
.tile { height: 189px; background: #272727; border-radius: 8px; position: relative; --back: #272727; }
.t3rd { margin-left: -1px; width: 187px; border-radius: 8px 0 0 8px; }
.last { margin-left: -3px; width: 140px; height: 191px; }
.ava { position: absolute; left: 94px; top: 94px; transform: translate(-50%, -50%); border-radius: 50%; display: grid; place-items: center; font-family: "Open Sans", sans-serif; font-weight: 600; line-height: 1; }
.ava.td { width: 117px; height: 117px; border: 3px solid #7b80d6; background: #dae0d6; box-shadow: inset 0 0 0 2px #252840, 0 8px 16px #0006; color: #38462a; font-size: 41px; letter-spacing: .8px; }
.anon { width: 94px; height: 94px; background: #292929; }
.al { width: 94px; height: 94px; background: #fdedcb; color: #8a6914; font-size: 36.500px; letter-spacing: .8px; }
.rd { width: 70px; height: 70px; background: #e5cdd1; color: #65121f; font-size: 26.500px; letter-spacing: .8px; top: 96px; left: 70px; }
.who { position: absolute; left: 24px; top: 150px; display: flex; align-items: center; font-size: 24px; line-height: 32px; white-space: nowrap; letter-spacing: -.2px; }
.who span { width: 131px; }
.mute { width: 20px; height: 20px; margin-left: 3px; margin-top: -4px; }

.controls { height: 152px; background: #303030; border-radius: 6px; display: flex; align-items: center; padding-left: 64px; gap: 88px; --back: #303030; }
.hang { margin-left: -36px; width: 120px; height: 120px; border-radius: 12px; background: #9c1b38; display: grid; place-items: center; }
.sysnav { height: 80px; background: #000; display: flex; align-items: center; padding-left: 167px; }
.sysnav svg + svg { margin-left: 153px; }
.sysnav svg:last-child { margin-left: 154px; }
```
